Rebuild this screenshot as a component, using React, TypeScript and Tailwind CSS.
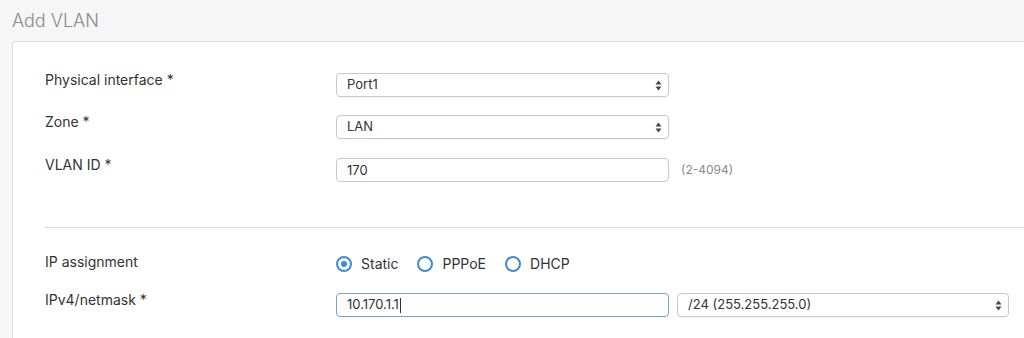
import React from 'react'

const font = { fontFamily: 'Inter, "Noto Sans", sans-serif' }

const Arrows = () => (
  <svg width="7" height="11" viewBox="0 0 7 11" className="text-[#444]">
    <path d="M3.5 0.5 L6.5 4.5 L0.5 4.5 Z" fill="currentColor" />
    <path d="M3.5 10.5 L6.5 6.5 L0.5 6.5 Z" fill="currentColor" />
  </svg>
)

const Select: React.FC<{ value: string; width: string }> = ({ value, width }) => (
  <div className={`${width} h-[24px] flex items-center justify-between rounded-[4px] border border-[#c9c9c9] bg-white pl-[10px] pr-[6px] text-[13px] text-[#333] shadow-[0_1px_1px_rgba(0,0,0,0.04)]`}>
    <span>{value}</span>
    <Arrows />
  </div>
)

const Radio: React.FC<{ label: string; checked?: boolean }> = ({ label, checked }) => (
  <div className="flex items-center gap-[9px] mr-[19px]">
    <span className="w-[16px] h-[16px] rounded-full border-2 border-[#3f8ad0] flex items-center justify-center">
      {checked && <span className="w-[6px] h-[6px] rounded-full bg-[#3f8ad0]" />}
    </span>
    <span className="text-[14px] text-[#333]">{label}</span>
  </div>
)

const Row: React.FC<{ label: string; children: React.ReactNode; className?: string }> = ({ label, children, className }) => (
  <div className={`flex ${className ?? ''}`}>
    <div className="w-[291px] shrink-0 text-[14px] text-[#333] leading-[16px] -mt-[1px]">{label}</div>
    <div className="flex items-center">{children}</div>
  </div>
)

export default function App() {
  return (
    <div className="w-[1024px] h-[338px] overflow-hidden bg-[#f6f6f6]" style={font}>
      <h1 className="pl-[12px] pt-[9px] h-[41px] text-[18px] font-light text-[#8b8b8b] leading-[24px]">Add VLAN</h1>
      <div className="ml-[12px] -mr-[20px] h-[400px] rounded-tl-[3px] border border-[#dcdcdc] bg-white pl-[32px] pt-[31px]">
        <Row label="Physical interface *" className="h-[24px] mb-[18px]">
          <Select value="Port1" width="w-[333px]" />
        </Row>
        <Row label="Zone *" className="h-[24px] mb-[19px]">
          <Select value="LAN" width="w-[333px]" />
        </Row>
        <Row label="VLAN ID *" className="h-[24px]">
          <input
            readOnly
            value="170"
            className="w-[333px] h-[24px] rounded-[4px] border border-[#c9c9c9] bg-white px-[10px] text-[13px] text-[#333] outline-none"
          />
          <span className="ml-[12px] text-[12px] text-[#8a8a8a]">(2-4094)</span>
        </Row>
        <div className="mt-[45px] mb-[27px] h-px bg-[#dedede]" />
        <Row label="IP assignment" className="h-[20px] mb-[18px] items-start">
          <div className="flex items-center -mt-[2px]">
            <Radio label="Static" checked />
            <Radio label="PPPoE" />
            <Radio label="DHCP" />
          </div>
        </Row>
        <Row label="IPv4/netmask *" className="h-[24px] mb-[23px]">
          <div className="w-[333px] h-[24px] flex items-center rounded-[4px] border border-[#6aa6dc] bg-white px-[10px] text-[13px] text-[#333]">
            10.170.1.1<span className="ml-[1px] w-px h-[15px] bg-[#333]" />
          </div>
          <div className="ml-[8px]">
            <Select value="/24 (255.255.255.0)" width="w-[332px]" />
          </div>
        </Row>
        <Row label="Gateway detail" className="h-[24px]">
          <span />
        </Row>
      </div>
    </div>
  )
}
